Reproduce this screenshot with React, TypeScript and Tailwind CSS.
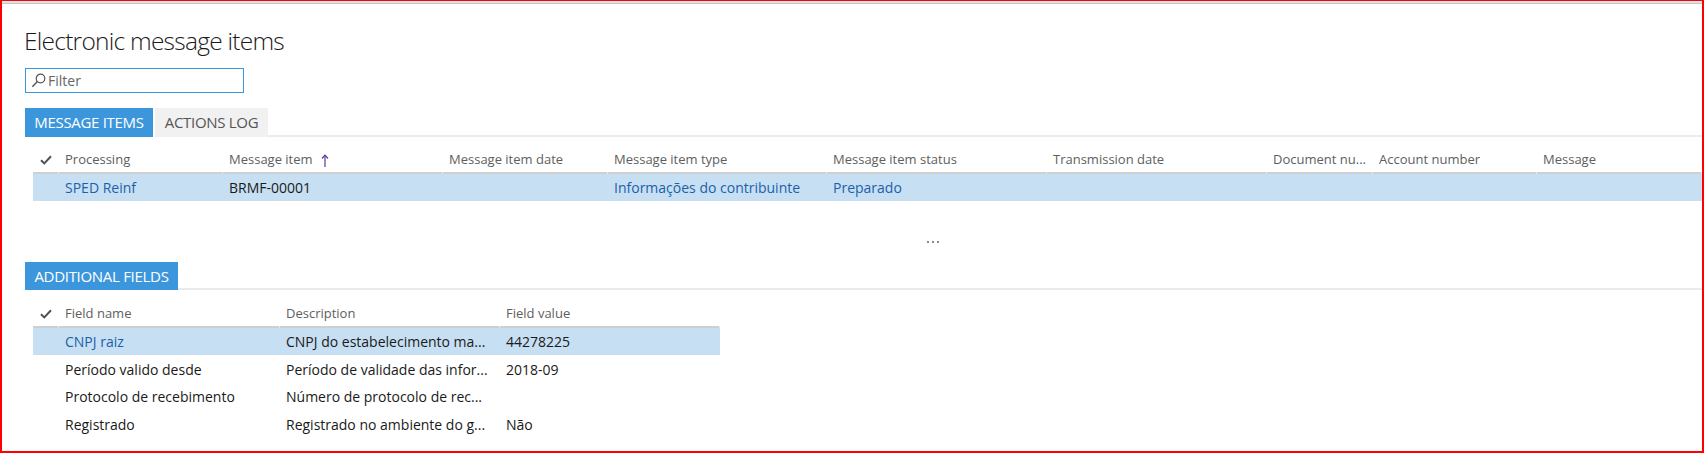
import React from "react";

const Check = () => (
  <svg width="12" height="10" viewBox="0 0 12 10" fill="none">
    <path d="M1 5.2 L4.3 8.4 L11 1.2" stroke="#505050" strokeWidth="2" />
  </svg>
);

const Search = () => (
  <svg width="15" height="15" viewBox="0 0 15 15" fill="none">
    <circle cx="9.5" cy="5.5" r="4.3" stroke="#555" strokeWidth="1.2" />
    <path d="M6.4 8.6 L1.3 13.7" stroke="#555" strokeWidth="1.4" />
  </svg>
);

const UpArrow = () => (
  <svg width="8" height="13" viewBox="0 0 8 13" fill="none">
    <path d="M4 1.5 V13" stroke="#5b3a8c" strokeWidth="1.2" />
    <path d="M1 4.5 L4 1.2 L7 4.5" stroke="#5b3a8c" strokeWidth="1.2" />
  </svg>
);

const cols1 = [
  { w: "w-[164px]", h: "Processing", v: "SPED Reinf", link: true },
  { w: "w-[220px]", h: "Message item", v: "BRMF-00001", arrow: true },
  { w: "w-[165px]", h: "Message item date", v: "" },
  { w: "w-[219px]", h: "Message item type", v: "Informações do contribuinte", link: true },
  { w: "w-[220px]", h: "Message item status", v: "Preparado", link: true },
  { w: "w-[220px]", h: "Transmission date", v: "" },
  { w: "w-[106px]", h: "Document nu...", v: "" },
  { w: "w-[164px]", h: "Account number", v: "" },
  { w: "flex-1", h: "Message", v: "" },
];

const rows2 = [
  { a: "CNPJ raiz", b: "CNPJ do estabelecimento ma...", c: "44278225", sel: true, h: "h-[27px]" },
  { a: "Período valido desde", b: "Período de validade das infor...", c: "2018-09", sel: false, h: "h-[28px]" },
  { a: "Protocolo de recebimento", b: "Número de protocolo de rec...", c: "", sel: false, h: "h-[27px]" },
  { a: "Registrado", b: "Registrado no ambiente do g...", c: "Não", sel: false, h: "h-[28px]" },
];

export default function App() {
  return (
    <div
      className="w-[1704px] h-[453px] bg-white border-t border-l-2 border-r-2 border-b-2 border-[#ff0000] overflow-hidden"
      style={{ fontFamily: "'Open Sans', 'Noto Sans', sans-serif" }}
    >
      <div className="h-[2px] bg-[#dbe3ea]" />
      <div className="h-px bg-[#c4c4c4]" />

      {/* Title */}
      <div className="mt-[20px] h-[34px] pl-[22px] flex items-center text-[24.5px] font-light text-[#1a1a1a] leading-none tracking-[-0.75px]">
        Electronic message items
      </div>

      {/* Filter */}
      <div className="mt-[10px] ml-[23px] w-[219px] h-[25px] border border-[#3c96dc] flex items-center pl-[5px] gap-[2px]">
        <Search />
        <span className="text-[14px] text-[#666] leading-none">Filter</span>
      </div>

      {/* Tabs */}
      <div className="mt-[15px] ml-[23px] flex items-end h-[29px]">
        <div className="h-[29px] w-[128px] bg-[#3c96dc] text-white text-[15px] flex items-center justify-center tracking-[-0.3px]">
          MESSAGE ITEMS
        </div>
        <div className="h-[29px] w-[2px]" />
        <div className="h-[29px] w-[113px] bg-[#f1f1f1] text-[#555] text-[15px] flex items-center justify-center tracking-[-0.3px]">
          ACTIONS LOG
        </div>
        <div className="flex-1 h-[2px] bg-[#ebebeb]" />
      </div>

      {/* Grid 1 */}
      <div className="ml-[31px] mt-[11px] text-[13px]">
        <div className="flex h-[26px]">
          <div className="w-[26px] border-b-2 border-[#cfcfcf] border-r border-r-white flex items-center justify-center pl-[1px]">
            <Check />
          </div>
          {cols1.map((c, i) => (
            <div
              key={i}
              className={`${c.w} border-b-2 border-[#cfcfcf] border-r border-r-white flex items-center pl-[6px] text-[#5e5e5e] whitespace-nowrap overflow-hidden`}
            >
              {c.h}
              {c.arrow && (
                <span className="ml-[8px] flex items-center">
                  <UpArrow />
                </span>
              )}
            </div>
          ))}
        </div>
        <div className="flex h-[27px] bg-[#c7dff3] text-[14px]">
          <div className="w-[26px]" />
          {cols1.map((c, i) => (
            <div
              key={i}
              className={`${c.w} flex items-center pl-[6px] whitespace-nowrap overflow-hidden ${c.link ? "text-[#1c5fa8]" : "text-[#1a1a1a]"}`}
            >
              {c.v}
            </div>
          ))}
        </div>
      </div>

      {/* Splitter */}
      <div className="h-[61px] relative">
        <div className="absolute left-[925px] top-[40px] flex gap-[3px]">
          <div className="w-[2px] h-[2px] bg-[#8a8a8a]" />
          <div className="w-[2px] h-[2px] bg-[#8a8a8a]" />
          <div className="w-[2px] h-[2px] bg-[#8a8a8a]" />
        </div>
      </div>

      {/* Additional fields tab */}
      <div className="ml-[23px] flex items-end h-[28px]">
        <div className="h-[28px] w-[153px] bg-[#3c96dc] text-white text-[15px] flex items-center justify-center tracking-[-0.3px]">
          ADDITIONAL FIELDS
        </div>
        <div className="flex-1 h-[2px] bg-[#ebebeb]" />
      </div>

      {/* Grid 2 */}
      <div className="ml-[31px] mt-[12px] text-[13px]">
        <div className="flex h-[26px]">
          <div className="w-[26px] border-b-2 border-[#cfcfcf] border-r border-r-white flex items-center justify-center pl-[1px]">
            <Check />
          </div>
          {["Field name", "Description", "Field value"].map((h, i) => (
            <div
              key={i}
              className={`${i === 0 ? "w-[221px]" : "w-[220px]"} border-b-2 border-[#cfcfcf] border-r border-r-white flex items-center pl-[6px] text-[#5e5e5e] whitespace-nowrap`}
            >
              {h}
            </div>
          ))}
        </div>
        {rows2.map((r, i) => (
          <div key={i} className={`flex w-[687px] text-[14px] ${r.h} ${r.sel ? "bg-[#c7dff3]" : ""}`}>
            <div className="w-[26px]" />
            <div className={`w-[221px] flex items-center pl-[6px] whitespace-nowrap overflow-hidden ${r.sel ? "text-[#1c5fa8]" : "text-[#1a1a1a]"}`}>
              {r.a}
            </div>
            <div className="w-[220px] flex items-center pl-[6px] whitespace-nowrap overflow-hidden text-[#1a1a1a]">
              {r.b}
            </div>
            <div className="w-[220px] flex items-center pl-[6px] whitespace-nowrap overflow-hidden text-[#1a1a1a]">
              {r.c}
            </div>
          </div>
        ))}
      </div>
    </div>
  );
}
